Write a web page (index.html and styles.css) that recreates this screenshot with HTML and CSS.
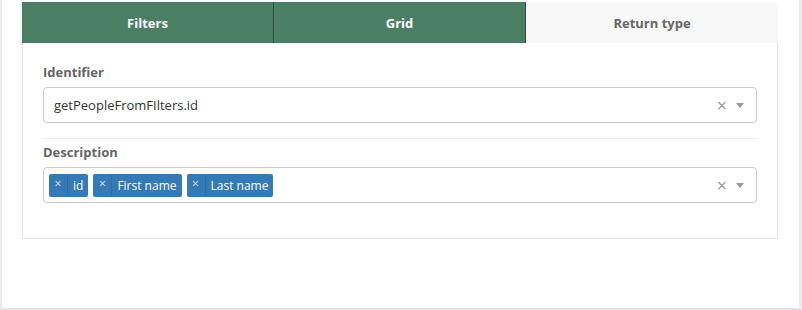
FILE: index.html
```html
<!DOCTYPE html>
<html lang="en">
<head>
  <meta charset="UTF-8" />
  <title>Return type</title>
  <link rel="stylesheet" href="styles.css">
</head>
<body>

  <div class="page">
    <div class="tabs">
      <div class="tab">Filters</div>
      <div class="tab">Grid</div>
      <div class="tab active">Return type</div>
    </div>

    <div class="panel">
      <div class="form-group">
        <label>Identifier</label>
        <div class="select">
          <span class="value">getPeopleFromFIlters.id</span>
          <span class="clear">&times;</span>
          <span class="arrow"></span>
        </div>
      </div>

      <hr class="divider">

      <div class="form-group">
        <label>Description</label>
        <div class="select">
          <ul class="tags">
            <li class="tag"><span class="remove">&times;</span><span class="text">id</span></li>
            <li class="tag"><span class="remove">&times;</span><span class="text">First name</span></li>
            <li class="tag"><span class="remove">&times;</span><span class="text">Last name</span></li>
          </ul>
          <span class="clear">&times;</span>
          <span class="arrow"></span>
        </div>
      </div>
    </div>
  </div>

</body>
</html>
```

FILE: styles.css
```css
* {
  box-sizing: border-box;
  font-family: 'Open Sans', sans-serif;
}

body {
  margin: 0;
  background: #ffffff;
  font-size: 13px;
  color: #333333;
}

.page {
  height: 310px;
  padding: 2px 21px 0 20px;
  border-left: 2px solid #e6eaee;
  border-right: 3px solid #e9ecef;
  border-bottom: 2px solid #e1e4e8;
}

.tabs {
  display: grid;
  grid-template-columns: repeat(3, 1fr);
}

.tab {
  height: 41px;
  line-height: 41px;
  padding-top: 1px;
  text-align: center;
  font-weight: 700;
  color: #ffffff;
  background: #4b7f63;
  border-right: 1px solid #2c4d45;
}

.tab.active {
  background: #f8f8f8;
  color: #666666;
  border-right: none;
}

.panel {
  border: 1px solid #e5e5e5;
  border-top: none;
  padding: 20px 20px 35px;
}

.form-group label {
  display: block;
  font-weight: 700;
  color: #666666;
  line-height: 18px;
  margin-bottom: 6px;
}

.select {
  display: flex;
  align-items: center;
  height: 36px;
  border: 1px solid #cccccc;
  border-radius: 4px;
  padding: 0 12px 0 10px;
}

.value {
  flex: 1;
}

.clear {
  color: #999999;
  font-size: 18px;
  line-height: 1;
  margin-right: 9px;
}

.arrow {
  width: 0;
  height: 0;
  margin-top: 1px;
  border-left: 4px solid transparent;
  border-right: 4px solid transparent;
  border-top: 5px solid #999999;
}

.divider {
  border: none;
  border-top: 1px solid #eeeeee;
  margin: 15px 0 4px;
}

.tags {
  flex: 1;
  display: flex;
  gap: 5px;
  list-style: none;
  margin: 0 0 0 -5px;
  padding: 0;
}

.tag {
  display: flex;
  height: 23px;
  line-height: 23px;
  background: #337ab7;
  color: #ffffff;
  border-radius: 2px;
}

.remove {
  width: 19px;
  text-align: center;
  font-size: 12px;
  line-height: 19px;
  color: #dde6f0;
  border-right: 1px solid #2e6da4;
}

.text {
  font-size: 12px;
  padding: 0 5px;
}
```
